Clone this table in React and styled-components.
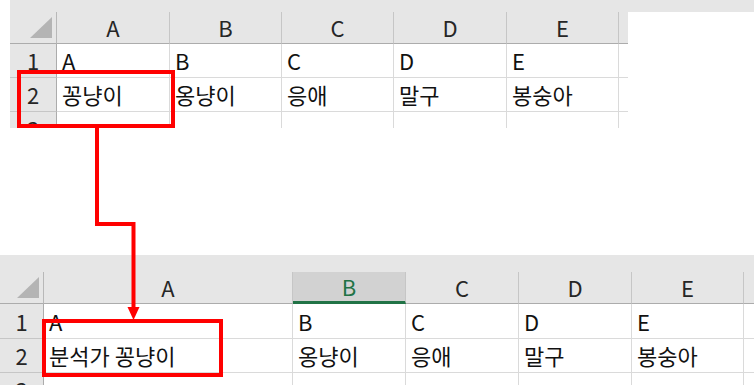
import React from 'react';
import styled, { createGlobalStyle } from 'styled-components';

const GlobalStyle = createGlobalStyle`
  body {
    margin: 0;
    background: #ffffff;
    font-family: "Noto Sans CJK KR", "Noto Sans", sans-serif;
  }
`;

const LETTERS = ['A', 'B', 'C', 'D', 'E'];

const topSheet = {
  offset: 10,
  rowHeader: 47,
  cols: [113, 112, 112, 113, 112],
  trail: 9,
  band: 12,
  header: 32,
  rows: [34, 34, 34],
  height: 128,
  data: [
    ['A', 'B', 'C', 'D', 'E'],
    ['꽁냥이', '옹냥이', '응애', '말구', '봉숭아'],
    ['', '', '', '', ''],
  ],
};

const bottomSheet = {
  offset: 0,
  rowHeader: 44,
  cols: [249, 113, 113, 113, 112],
  trail: 10,
  band: 17,
  header: 32,
  rows: [35, 34, 34],
  height: 130,
  selected: 1,
  data: [
    ['A', 'B', 'C', 'D', 'E'],
    ['분석가 꽁냥이', '옹냥이', '응애', '말구', '봉숭아'],
    ['', '', '', '', ''],
  ],
};

function Sheet({ sheet }) {
  const template = [sheet.rowHeader, ...sheet.cols, sheet.trail].map((w) => `${w}px`).join(' ');
  return (
    <SheetFrame $offset={sheet.offset} $height={sheet.height}>
      <Band $height={sheet.band} />
      <Grid $template={template}>
        <Corner $height={sheet.header}>
          <svg width="22" height="21" viewBox="0 0 22 21">
            <polygon points="22,0 22,21 0,21" fill="#b4b4b4" />
          </svg>
        </Corner>
        {LETTERS.map((l, i) => (
          <ColHeader key={l} $height={sheet.header} $active={sheet.selected === i}>
            {l}
          </ColHeader>
        ))}
        <ColHeader $height={sheet.header} $last />
        {sheet.data.map((row, r) => (
          <React.Fragment key={r}>
            <RowHeader $height={sheet.rows[r]}>{r + 1}</RowHeader>
            {row.map((text, c) => (
              <Cell key={c} $height={sheet.rows[r]}>
                {text}
              </Cell>
            ))}
            <Cell $height={sheet.rows[r]} $last />
          </React.Fragment>
        ))}
      </Grid>
    </SheetFrame>
  );
}

export default function App() {
  return (
    <>
      <GlobalStyle />
      <Page>
        <Sheet sheet={topSheet} />
        <Sheet sheet={bottomSheet} />
        <Annotation width="754" height="385" viewBox="0 0 754 385">
          <rect x="19" y="72" width="154" height="54" fill="none" stroke="#ff0000" strokeWidth="4" />
          <polyline
            points="97,126 97,224 133.5,224 133.5,309"
            fill="none"
            stroke="#ff0000"
            strokeWidth="4"
            strokeLinejoin="miter"
          />
          <polygon points="127.5,307 139.5,307 133.5,320" fill="#ff0000" />
          <rect x="44" y="321" width="177" height="54" fill="none" stroke="#ff0000" strokeWidth="4" />
        </Annotation>
      </Page>
    </>
  );
}

const Page = styled.div`
  position: relative;
  width: 754px;
  height: 385px;
  overflow: hidden;
  display: flex;
  flex-direction: column;
  gap: 127px;
`;

const SheetFrame = styled.div`
  margin-left: ${(p) => p.$offset}px;
  height: ${(p) => p.$height}px;
  overflow: hidden;
  flex-shrink: 0;
`;

const Band = styled.div`
  height: ${(p) => p.$height}px;
  background: #e6e6e6;
`;

const Grid = styled.div`
  display: grid;
  grid-template-columns: ${(p) => p.$template};
  font-size: 22px;
  line-height: 1;
  color: #111;
`;

const HeaderBase = styled.div`
  box-sizing: border-box;
  height: ${(p) => p.$height}px;
  background: #e6e6e6;
  display: flex;
`;

const Corner = styled(HeaderBase)`
  border-right: 1px solid #b8b8b8;
  border-bottom: 1px solid #acacac;
  align-items: flex-end;
  justify-content: flex-end;
  padding: 0 4px 5px 0;
`;

const ColHeader = styled(HeaderBase)`
  align-items: center;
  justify-content: center;
  padding-bottom: 2px;
  background: ${(p) => (p.$active ? '#d2d2d2' : '#e6e6e6')};
  color: ${(p) => (p.$active ? '#217346' : '#262626')};
  border-right: ${(p) => (p.$last ? 'none' : '1px solid #c6c6c6')};
  border-bottom: ${(p) => (p.$active ? '3px solid #217346' : '1px solid #acacac')};
`;

const RowHeader = styled.div`
  box-sizing: border-box;
  height: ${(p) => p.$height}px;
  background: #e6e6e6;
  color: #262626;
  border-right: 1px solid #acacac;
  border-bottom: 1px solid #c6c6c6;
  display: flex;
  align-items: flex-end;
  justify-content: center;
  padding-bottom: 6px;
`;

const Cell = styled.div`
  box-sizing: border-box;
  height: ${(p) => p.$height}px;
  background: #ffffff;
  border-right: ${(p) => (p.$last ? 'none' : '1px solid #dadada')};
  border-bottom: 1px solid #dadada;
  display: flex;
  align-items: flex-end;
  padding: 0 0 6px 5px;
  white-space: nowrap;
  overflow: hidden;
`;

const Annotation = styled.svg`
  position: absolute;
  left: 0;
  top: 0;
  pointer-events: none;
`;
